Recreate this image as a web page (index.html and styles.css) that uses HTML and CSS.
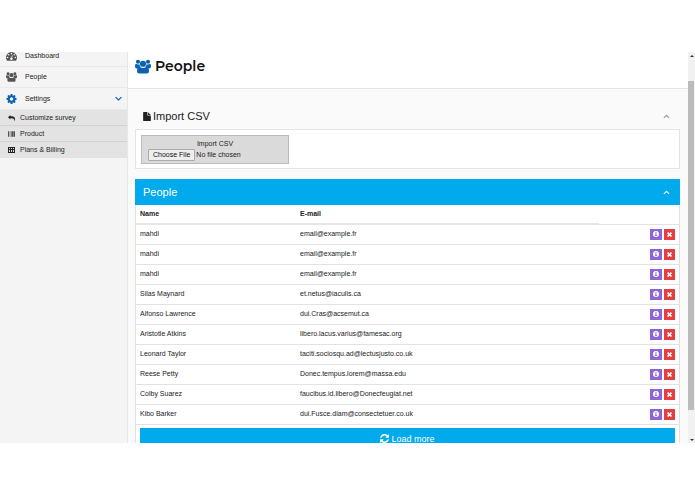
FILE: index.html
```html
<!DOCTYPE html>
<html lang="en">
<head>
    <meta charset="UTF-8">
    <meta name="viewport" content="width=device-width, initial-scale=1.0">
    <title>People</title>
    <link rel="stylesheet" href="styles.css">
</head>
<body>
    <!-- Icon sprite -->
    <svg class="sprite" aria-hidden="true">
        <symbol id="i-users" viewBox="0 0 32 28">
            <circle cx="6" cy="4.500" r="4.200"/>
            <circle cx="26" cy="4.500" r="4.200"/>
            <circle cx="16" cy="8.500" r="6.200"/>
            <path d="M2 8.500q4 2.500 7 .8q.2 3.500 2.300 5.700q-3.300.5-5 3H3.500Q0 18 0 14Q0 8.500 2 8.500zM30 8.500q-4 2.500-7 .8q-.2 3.500-2.300 5.700q3.300.5 5 3h2.800Q32 18 32 14Q32 8.500 30 8.500z"/>
            <path d="M10 15.200q6 3.500 12 0Q28 15 28 23.500q0 4.500-4.500 4.500h-15Q4 28 4 23.500Q4 15 10 15.200z"/>
        </symbol>
        <symbol id="i-dashboard" viewBox="0 0 28 24">
            <path fill-rule="evenodd" d="M14 2a14 14 0 0 1 11.800 21.500q-.3.500-.9.500H3.100q-.6 0-.9-.5A14 14 0 0 1 14 2zM4 14a2 2 0 1 0 0 4a2 2 0 0 0 0-4zM7 7a2 2 0 1 0 0 4a2 2 0 0 0 0-4zM14 4a2 2 0 1 0 0 4a2 2 0 0 0 0-4zM21 7a2 2 0 1 0 0 4a2 2 0 0 0 0-4zM24 14a2 2 0 1 0 0 4a2 2 0 0 0 0-4zM15.200 10l-1.600 6a3 3 0 1 0 1.900.5l1.600-6z"/>
        </symbol>
        <symbol id="i-cog" viewBox="128 128 1536 1536">
            <path d="M1152 896q0-106-75-181t-181-75-181 75-75 181 75 181 181 75 181-75 75-181zm512-109v222q0 12-8 23t-20 13l-185 28q-19 54-39 91 35 50 107 138 10 12 10 25t-9 23q-27 37-99 108t-94 71q-12 0-26-9l-138-108q-44 23-91 38-16 136-29 186-7 28-36 28h-222q-14 0-24.500-8.500t-11.500-21.500l-28-184q-49-16-90-37l-141 107q-10 9-25 9-14 0-25-11-126-114-165-168-7-10-7-23 0-12 8-23 15-21 51-66.500t54-70.500q-27-50-41-99l-183-27q-13-2-21-12.500t-8-23.500v-222q0-12 8-23t19-13l186-28q14-46 39-92-40-57-107-138-10-12-10-24 0-10 9-23 26-36 98.500-107.500t94.500-71.500q13 0 26 10l138 107q44-23 91-38 16-136 29-186 7-28 36-28h222q14 0 24.500 8.500t11.500 21.500l28 184q49 16 90 37l142-107q9-9 24-9 13 0 25 10 129 119 165 170 7 8 7 22 0 12-8 23-15 21-51 66.500t-54 70.500q26 50 41 98l183 28q13 2 21 12.500t8 23.500z"/>
        </symbol>
        <symbol id="i-reply" viewBox="0 0 28 24">
            <path d="M0 9L9.500 0v5H14q14 0 14 11q0 4-2.500 8q-.8.500-.8-1Q25.500 13 14 13H9.500v5z"/>
        </symbol>
        <symbol id="i-barcode" viewBox="0 0 28 24">
            <path d="M0 1h2v22H0zM3 1h1v22H3zM6 1h1v22H6zM9 1h1v22H9zM12 1h2v22h-2zM16 1h2v22h-2zM19 1h2v22h-2zM22 1h1v22h-1zM25 1h3v22h-3z"/>
        </symbol>
        <symbol id="i-table" viewBox="0 0 7 6">
            <path fill-rule="evenodd" d="M0 0h7v6H0zM1 1v1h1V1zM3 1v1h1V1zM5 1v1h1V1zM1 3v2h1V3zM3 3v2h1V3zM5 3v2h1V3z"/>
        </symbol>
        <symbol id="i-file" viewBox="0 0 24 28">
            <path d="M0 1.500Q0 0 1.500 0H13v9.500q0 1.500 1.500 1.500H24v15.500q0 1.500-1.500 1.500h-21Q0 28 0 26.500zM15 0.500L23.500 9H15z"/>
        </symbol>
        <symbol id="i-up" viewBox="0 0 12 8">
            <path d="M1.500 6.500L6 2l4.500 4.500" fill="none" stroke="currentColor" stroke-width="2"/>
        </symbol>
        <symbol id="i-down" viewBox="0 0 12 8">
            <path d="M1 1.500l5 5l5-5" fill="none" stroke="currentColor" stroke-width="2"/>
        </symbol>
        <symbol id="i-info" viewBox="0 0 24 24">
            <path fill-rule="evenodd" d="M12 0a12 12 0 1 1 0 24a12 12 0 0 1 0-24zM10 4v4h4V4zM8 10v3h2v4H8v3h8v-3h-2v-7z"/>
        </symbol>
        <symbol id="i-times" viewBox="0 0 20 20">
            <path d="M4.500 0L10 5.500L15.500 0L20 4.500L14.500 10L20 15.500L15.500 20L10 14.500L4.500 20L0 15.500L5.500 10L0 4.500z"/>
        </symbol>
        <symbol id="i-refresh" viewBox="128 128 1536 1536">
            <path d="M1639 1056q0 5-1 7-64 268-268 434.500t-478 166.500q-146 0-282.500-55t-243.500-157l-129 129q-19 19-45 19t-45-19-19-45v-448q0-26 19-45t45-19h448q26 0 45 19t19 45-19 45l-137 137q71 66 161 102t187 36q134 0 250-65t186-179q11-17 53-117 8-23 30-23h192q13 0 22.500 9.500t9.500 22.500zm25-800v448q0 26-19 45t-45 19h-448q-26 0-45-19t-19-45 19-45l138-138q-148-137-349-137-134 0-250 65t-186 179q-11 17-53 117-8 23-30 23h-199q-13 0-22.500-9.500t-9.500-22.500v-7q65-268 270-434.500t480-166.500q146 0 284 55.500t245 156.500l130-129q19-19 45-19t45 19 19 45z"/>
        </symbol>
    </svg>

    <div class="app">
        <nav class="sidebar">
            <ul class="menu">
                <li><a href="#"><svg class="icon"><use href="#i-dashboard"/></svg>Dashboard</a></li>
                <li><a href="#"><svg class="icon"><use href="#i-users"/></svg>People</a></li>
                <li class="active">
                    <a href="#"><svg class="icon"><use href="#i-cog"/></svg>Settings<svg class="arrow"><use href="#i-down"/></svg></a>
                    <ul class="submenu">
                        <li><a href="#"><svg class="icon"><use href="#i-reply"/></svg>Customize survey</a></li>
                        <li><a href="#"><svg class="icon"><use href="#i-barcode"/></svg>Product</a></li>
                        <li><a href="#"><svg class="icon"><use href="#i-table"/></svg>Plans &amp; Billing</a></li>
                    </ul>
                </li>
            </ul>
        </nav>

        <main class="content">
            <header class="page-header">
                <svg class="icon"><use href="#i-users"/></svg>
                <h1>People</h1>
            </header>

            <section class="panel import">
                <div class="panel-heading">
                    <svg class="icon"><use href="#i-file"/></svg>
                    <h2>Import CSV</h2>
                    <button class="toggle" type="button" aria-label="Collapse import"><svg><use href="#i-up"/></svg></button>
                </div>
                <div class="panel-body">
                    <form class="upload">
                        <label for="csv">Import CSV</label>
                        <input type="file" id="csv">
                    </form>
                </div>
            </section>

            <section class="panel people">
                <div class="panel-heading">
                    <h2>People</h2>
                    <button class="toggle" type="button" aria-label="Collapse people"><svg><use href="#i-up"/></svg></button>
                </div>
                <table>
                    <thead>
                        <tr><th class="name">Name</th><th class="email">E-mail</th><td class="actions"></td></tr>
                    </thead>
                    <tbody id="rows"></tbody>
                </table>
                <div class="panel-footer">
                    <button class="load-more" type="button"><svg><use href="#i-refresh"/></svg>Load more</button>
                </div>
            </section>
        </main>

        <div class="scrollbar" aria-hidden="true">
            <span class="scroll-up"></span>
            <span class="scroll-track"><span class="scroll-thumb"></span></span>
            <span class="scroll-down"></span>
        </div>
    </div>

    <script>
        const people = [
            ['mahdi', 'email@example.fr'],
            ['mahdi', 'email@example.fr'],
            ['mahdi', 'email@example.fr'],
            ['Silas Maynard', 'et.netus@iaculis.ca'],
            ['Alfonso Lawrence', 'dui.Cras@acsemut.ca'],
            ['Aristotle Atkins', 'libero.lacus.varius@famesac.org'],
            ['Leonard Taylor', 'taciti.sociosqu.ad@lectusjusto.co.uk'],
            ['Reese Petty', 'Donec.tempus.lorem@massa.edu'],
            ['Colby Suarez', 'faucibus.id.libero@Donecfeugiat.net'],
            ['Kibo Barker', 'dui.Fusce.diam@consectetuer.co.uk']
        ];

        document.getElementById('rows').innerHTML = people.map(([name, email]) => `
            <tr>
                <td>${name}</td>
                <td>${email}</td>
                <td class="actions"><div class="buttons">
                    <button class="btn info" type="button" aria-label="Details"><svg><use href="#i-info"/></svg></button>
                    <button class="btn delete" type="button" aria-label="Delete"><svg><use href="#i-times"/></svg></button>
                </div></td>
            </tr>`).join('');
    </script>
</body>
</html>
```

FILE: styles.css
```css
* {
    box-sizing: border-box;
}

body {
    margin: 0;
    padding: 52px 0 51px;
    height: 100vh;
    overflow: hidden;
    display: flex;
    font-family: "Liberation Sans", Arial, sans-serif;
    font-size: 7px;
    line-height: 10px;
    color: #222;
    background-color: #fff;
}

h1, h2, ul {
    margin: 0;
    padding: 0;
    list-style: none;
}

a {
    color: inherit;
    text-decoration: none;
}

button {
    border: 0;
    padding: 0;
    font-family: inherit;
    color: inherit;
    background: none;
    cursor: pointer;
}

svg {
    display: block;
    flex: none;
    fill: currentColor;
}

.sprite {
    display: none;
}

.app {
    flex: 1;
    min-width: 0;
    display: flex;
    overflow: hidden;
    background-color: #fafafa;
}

/* Sidebar */
.sidebar {
    flex: none;
    width: 128px;
    overflow: hidden;
    background-color: #f4f4f4;
    border-right: 1px solid #e7e7e7;
}

.menu {
    margin-top: -6px;
}

.menu a {
    display: flex;
    align-items: center;
    gap: 8px;
    height: 21px;
    padding: 0 5px 0 6px;
    border-bottom: 1px solid #e9e9e9;
}

.menu .icon {
    width: 11px;
    height: 10px;
    color: #555;
}

.menu .active > a {
    height: 22px;
}

.menu .active > a .icon {
    color: #0c62b0;
}

.menu .arrow {
    width: 7px;
    height: 5px;
    margin-left: auto;
    color: #0c62b0;
}

.menu .submenu a {
    height: 16px;
    gap: 5px;
    padding-left: 8px;
    background-color: #e3e3e3;
    border-bottom-color: #d3d3d3;
}

.menu .submenu li:last-child a {
    border-bottom-color: #e3e3e3;
}

.menu .submenu .icon {
    width: 7px;
    height: 6px;
    color: #222;
}

/* Page */
.content {
    flex: 1;
    min-width: 0;
    overflow: hidden;
}

.page-header {
    display: flex;
    align-items: center;
    gap: 4px;
    height: 37px;
    padding: 0 7px 8px;
    background-color: #fff;
    border-bottom: 1px solid #e4e4e4;
}

.page-header .icon {
    width: 16px;
    height: 15px;
    color: #0c62b0;
}

.page-header h1 {
    font-family: Montserrat, Inter, sans-serif;
    font-size: 14px;
    line-height: 20px;
    font-weight: 600;
    color: #111;
}

/* Panels */
.panel {
    margin: 0 8px 10px 7px;
}

.panel-heading {
    display: flex;
    align-items: center;
    height: 26px;
    padding: 0 10px 0 8px;
}

.panel-heading h2 {
    font-size: 11px;
    line-height: 14px;
    font-weight: 400;
}

.panel-heading .icon {
    width: 8px;
    height: 9px;
    margin-right: 2px;
}

.toggle {
    margin-left: auto;
}

.toggle svg {
    width: 7px;
    height: 5px;
}

.import {
    padding-top: 14px;
}

.import .toggle {
    color: #999;
}

.panel-body {
    display: flex;
    padding: 5px 5px 4px;
    border: 1px solid #e4e4e4;
    background-color: #fff;
}

.upload {
    width: 148px;
    padding: 3px 6px 2px;
    background-color: #dadada;
    border: 1px solid #bbb;
}

.upload label {
    display: block;
    text-align: center;
}

.upload input {
    display: block;
    width: 100%;
    font-family: inherit;
    font-size: 7px;
    line-height: 10px;
    color: #222;
}

.upload input::file-selector-button {
    margin: 0 1px 0 0;
    padding: 0 4px;
    border: 1px solid #aaa;
    border-radius: 1px;
    font-family: inherit;
    font-size: 7px;
    line-height: 10px;
    color: #111;
    background-color: #eee;
}

.people {
    border: 1px solid #e0e0e0;
    border-top: 0;
    background-color: #fff;
}

.people .panel-heading {
    margin: 0 -1px;
    color: #fff;
    background-color: #00aaec;
}

/* Table */
table {
    width: 100%;
    table-layout: fixed;
    border-collapse: collapse;
}

th, td {
    height: 20px;
    padding: 0 4px;
    text-align: left;
    border-bottom: 1px solid #e2e2e2;
}

thead th, thead td {
    height: 19px;
}

thead th {
    border-bottom: 2px solid #e6e6e6;
}

th.name {
    width: 160px;
}

td.actions {
    width: 80px;
}

.buttons {
    display: flex;
    justify-content: flex-end;
    gap: 2px;
}

.btn {
    display: flex;
    align-items: center;
    justify-content: center;
    width: 11px;
    height: 11px;
    color: #fff;
}

.btn.info {
    width: 12px;
    background-color: #8e65d6;
}

.btn.delete {
    background-color: #e53e40;
}

.btn svg {
    width: 6px;
    height: 6px;
}

.btn.delete svg {
    width: 5px;
    height: 5px;
}

/* Load more */
.panel-footer {
    padding: 3px 4px 4px;
}

.load-more {
    display: flex;
    align-items: center;
    justify-content: center;
    gap: 2px;
    width: 100%;
    height: 22px;
    font-size: 9px;
    color: #fff;
    background-color: #00aaec;
}

.load-more svg {
    width: 9px;
    height: 9px;
}

/* Scrollbar */
.scrollbar {
    flex: none;
    width: 7px;
    display: flex;
    flex-direction: column;
    align-items: center;
    padding: 3px 0 2px;
    background-color: #f1f1f1;
}

.scroll-up, .scroll-down {
    border: 2px solid transparent;
}

.scroll-up {
    border-top: 0;
    border-bottom-color: #333;
}

.scroll-down {
    border-bottom: 0;
    border-top-color: #333;
}

.scroll-track {
    flex: 1;
    width: 100%;
    padding: 24px 0 29px;
}

.scroll-thumb {
    display: block;
    width: 6px;
    height: 100%;
    background-color: #bbb;
}
```
